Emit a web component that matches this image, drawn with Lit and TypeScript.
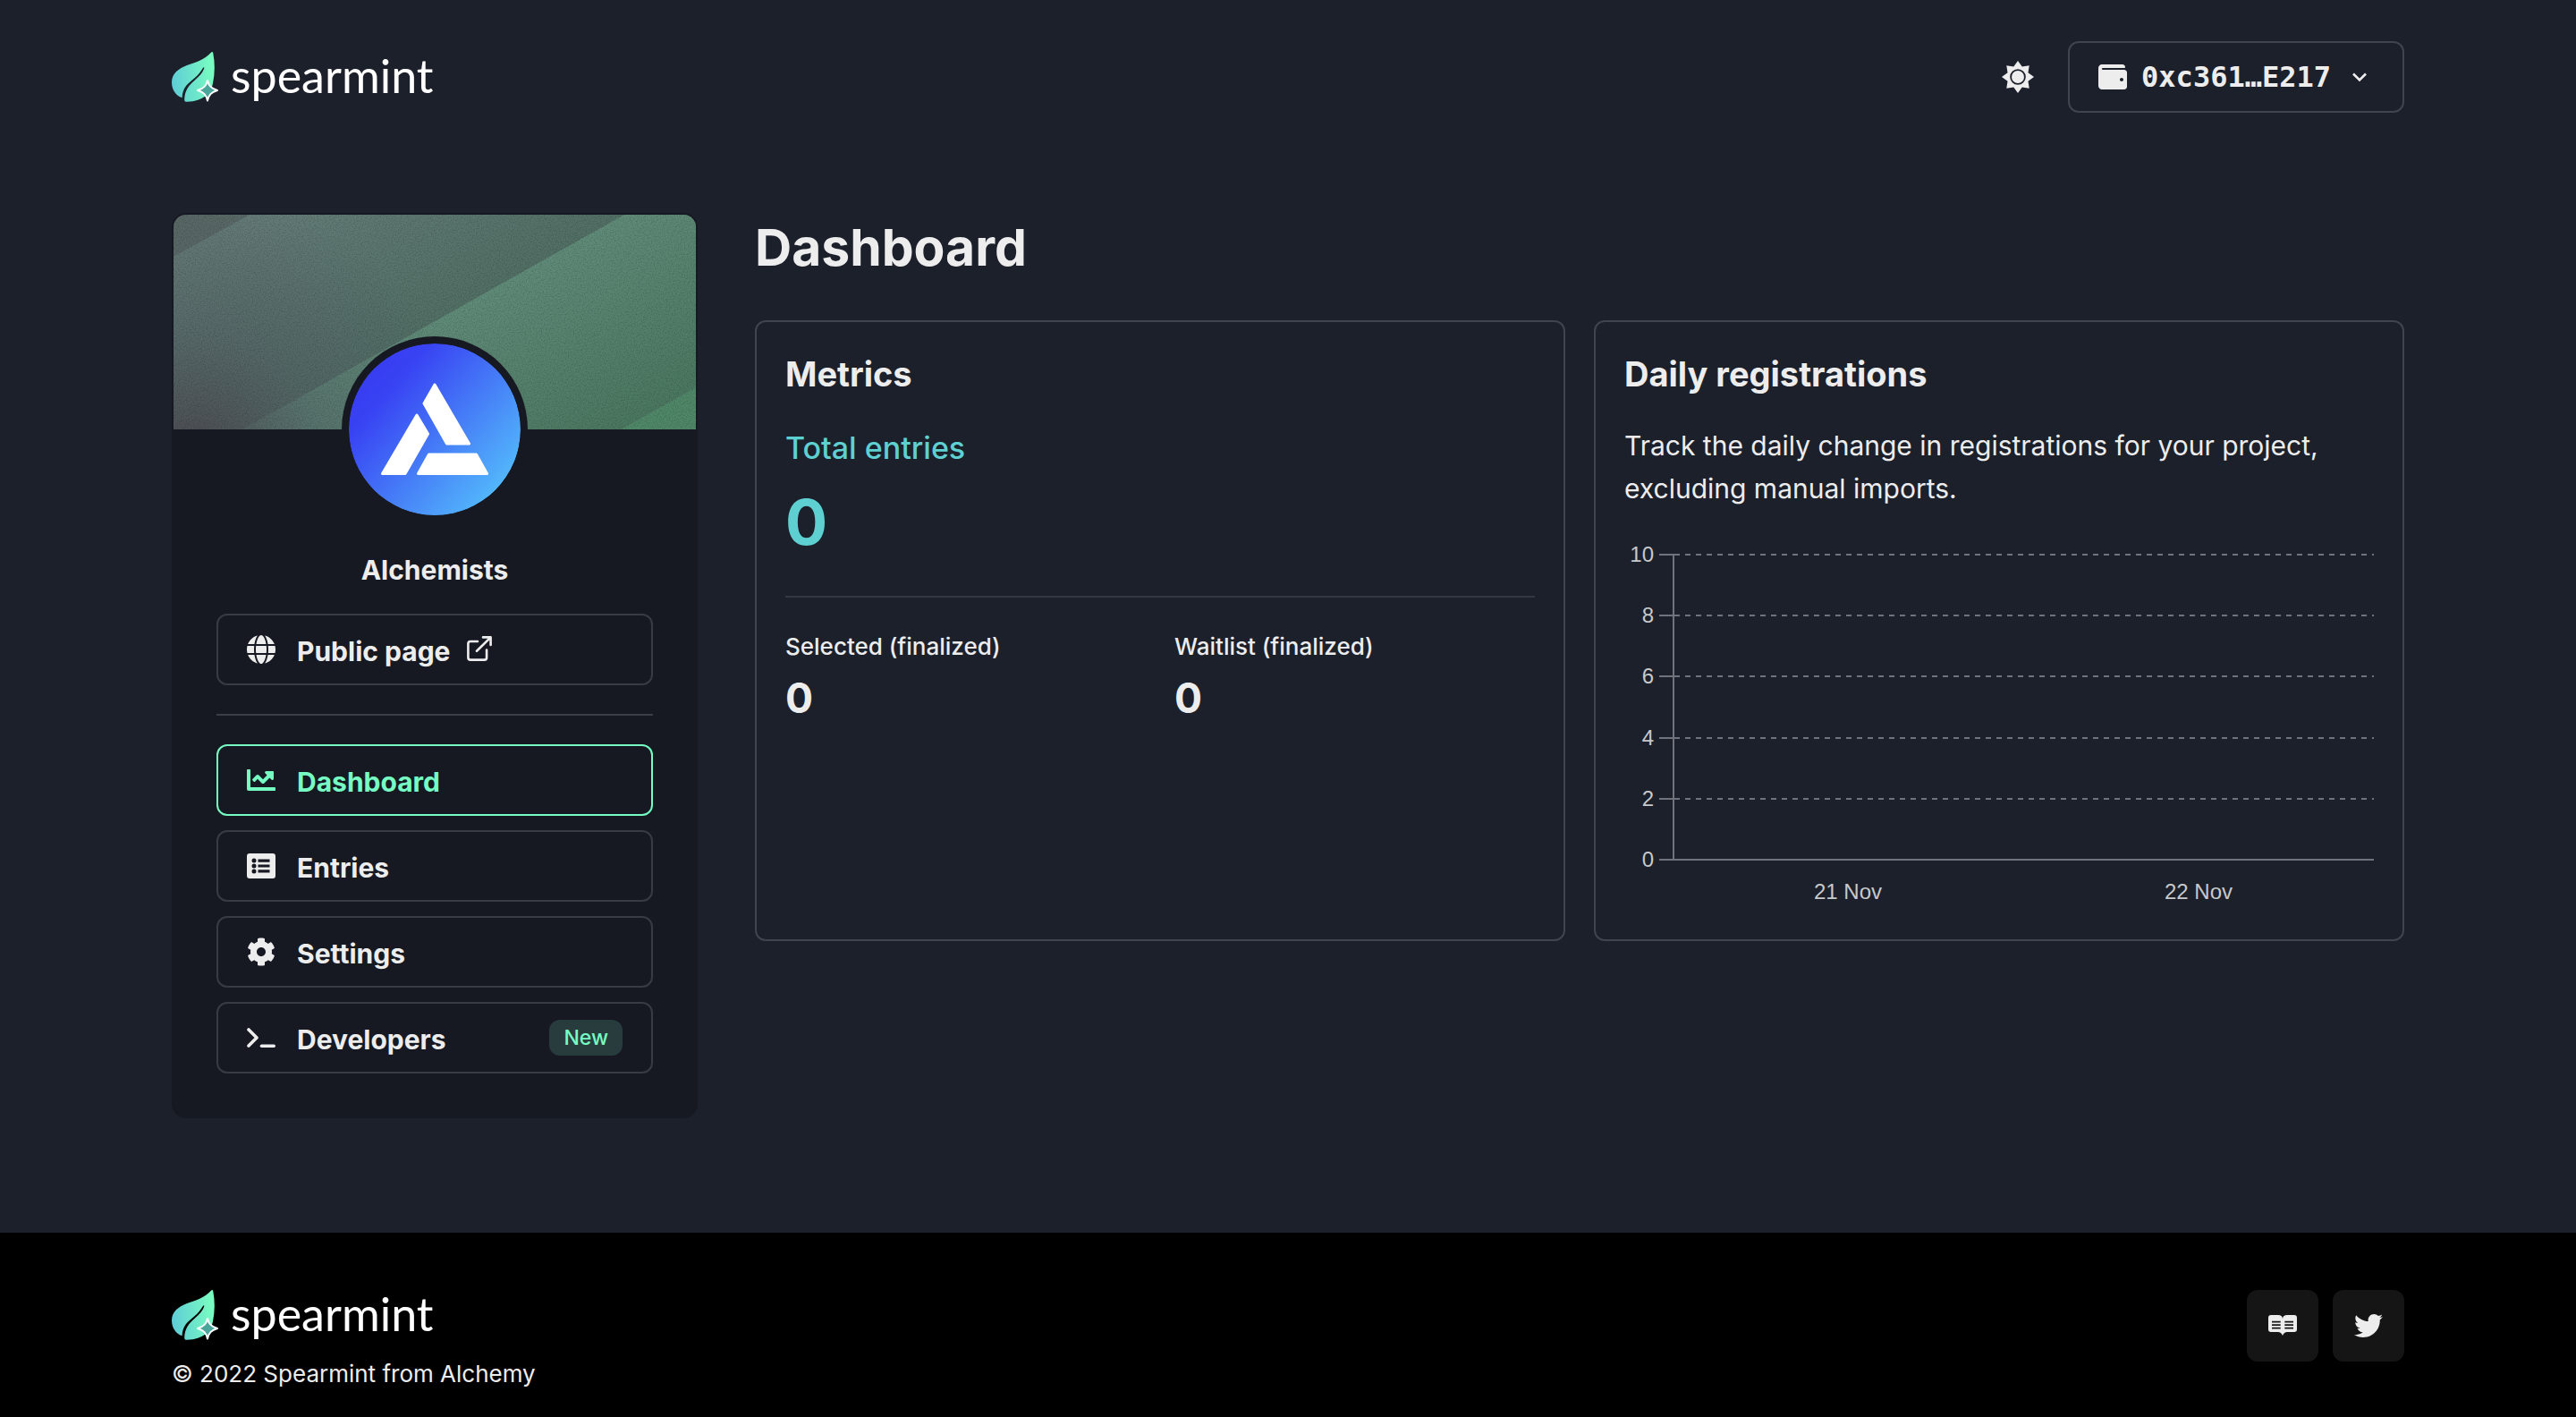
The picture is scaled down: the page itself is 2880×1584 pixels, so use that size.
import { LitElement, html, css, svg, nothing } from "lit";
import { customElement, property } from "lit/decorators.js";

const ICONS = {
  globe:
    "M352 256c0 22.2-1.2 43.6-3.3 64H163.3c-2.2-20.4-3.3-41.8-3.3-64s1.2-43.6 3.3-64H348.7c2.2 20.4 3.3 41.8 3.3 64zm28.8-64H503.9c5.3 20.5 8.1 41.9 8.1 64s-2.8 43.5-8.1 64H380.8c2.1-20.6 3.2-42 3.2-64s-1.1-43.4-3.2-64zm112.6-32H376.7c-10-63.9-29.8-117.4-55.3-151.6c78.3 20.7 142 77.5 171.9 151.6zm-149.1 0H167.7c6.1-36.4 15.5-68.6 27-94.7c10.5-23.6 22.2-40.7 33.5-51.5C239.4 3.2 248.7 0 256 0s16.6 3.2 27.8 13.8c11.3 10.8 23 27.9 33.5 51.5c11.6 26 20.9 58.2 27 94.7zm-209 0H18.6C48.6 85.9 112.2 29.1 190.6 8.4C165.1 42.6 145.3 96.1 135.3 160zM8.1 192H131.2c-2.1 20.6-3.2 42-3.2 64s1.1 43.4 3.2 64H8.1C2.8 299.5 0 278.1 0 256s2.8-43.5 8.1-64zM194.7 446.6c-11.6-26-20.9-58.2-27-94.6H344.3c-6.1 36.4-15.5 68.6-27 94.6c-10.5 23.6-22.2 40.7-33.5 51.5C272.6 508.8 263.3 512 256 512s-16.6-3.2-27.8-13.8c-11.3-10.8-23-27.9-33.5-51.5zM135.3 352c10 63.9 29.8 117.4 55.3 151.6C112.2 482.9 48.6 426.1 18.6 352H135.3zm358.1 0c-30 74.1-93.6 130.9-171.9 151.6c25.5-34.2 45.2-87.7 55.3-151.6H493.4z",
  chart:
    "M496 384H64V80c0-8.84-7.16-16-16-16H16C7.16 64 0 71.16 0 80v336c0 17.67 14.33 32 32 32h464c8.84 0 16-7.16 16-16v-32c0-8.84-7.16-16-16-16zM464 96H345.94c-21.38 0-32.09 25.85-16.97 40.97l32.4 32.4L288 242.75l-73.37-73.37c-12.5-12.5-32.76-12.5-45.25 0l-68.69 68.69c-6.25 6.25-6.25 16.38 0 22.63l22.62 22.62c6.25 6.25 16.38 6.25 22.63 0L192 237.25l73.37 73.37c12.5 12.5 32.76 12.5 45.25 0l96-96 32.4 32.4c15.12 15.12 40.97 4.41 40.97-16.97V112c.01-8.84-7.15-16-15.99-16z",
  cog: "M487.4 315.7l-42.6-24.6c4.3-23.2 4.3-47 0-70.2l42.6-24.6c4.9-2.8 7.1-8.6 5.5-14-11.1-35.6-30-67.8-54.7-94.6-3.8-4.1-10-5.1-14.8-2.3L380.8 110c-17.9-15.4-38.5-27.3-60.8-35.1V25.8c0-5.6-3.9-10.5-9.4-11.7-36.7-8.2-74.3-7.8-109.2 0-5.5 1.2-9.4 6.1-9.4 11.7V75c-22.2 7.9-42.8 19.8-60.8 35.1L88.7 85.5c-4.9-2.8-11-1.9-14.8 2.3-24.7 26.7-43.6 58.9-54.7 94.6-1.7 5.4.6 11.2 5.5 14L67.3 221c-4.3 23.2-4.3 47 0 70.2l-42.6 24.6c-4.9 2.8-7.1 8.6-5.5 14 11.1 35.6 30 67.8 54.7 94.6 3.8 4.1 10 5.1 14.8 2.3l42.6-24.6c17.9 15.4 38.5 27.3 60.8 35.1v49.2c0 5.6 3.9 10.5 9.4 11.7 36.7 8.2 74.3 7.8 109.2 0 5.5-1.2 9.4-6.1 9.4-11.7v-49.2c22.2-7.9 42.8-19.8 60.8-35.1l42.6 24.6c4.9 2.8 11 1.9 14.8-2.3 24.7-26.7 43.6-58.9 54.7-94.6 1.5-5.5-.7-11.3-5.6-14.1zM256 336c-44.1 0-80-35.9-80-80s35.9-80 80-80 80 35.9 80 80-35.9 80-80 80z",
  wallet:
    "M461.2 128H80c-8.84 0-16-7.16-16-16s7.16-16 16-16h384c8.84 0 16-7.16 16-16 0-26.51-21.49-48-48-48H64C28.65 32 0 60.65 0 96v320c0 35.35 28.65 64 64 64h397.2c28.02 0 50.8-21.53 50.8-48V176c0-26.47-22.78-48-50.8-48zM416 336c-17.67 0-32-14.33-32-32s14.33-32 32-32 32 14.33 32 32-14.33 32-32 32z",
  twitter:
    "M459.37 151.716c.325 4.548.325 9.097.325 13.645 0 138.72-105.583 298.558-298.558 298.558-59.452 0-114.68-17.219-161.137-47.106 8.447.974 16.568 1.299 25.34 1.299 49.055 0 94.213-16.568 130.274-44.832-46.132-.975-84.792-31.188-98.112-72.772 6.498.974 12.995 1.624 19.818 1.624 9.421 0 18.843-1.3 27.614-3.573-48.081-9.747-84.143-51.98-84.143-102.985v-1.299c13.969 7.797 30.214 12.67 47.431 13.319-28.264-18.843-46.781-51.005-46.781-87.391 0-19.492 5.197-37.36 14.294-52.954 51.655 63.675 129.3 105.258 216.365 109.807-1.624-7.797-2.599-15.918-2.599-24.04 0-57.828 46.782-104.934 104.934-104.934 30.213 0 57.502 12.67 76.67 33.137 23.715-4.548 46.456-13.32 66.599-25.34-7.798 24.366-24.366 44.833-46.132 57.827 21.117-2.273 41.584-8.122 60.426-16.243-14.292 20.791-32.161 39.308-52.628 54.253z",
};

const solid = (d: string) => html`
  <svg class="icon" viewBox="0 0 512 512" aria-hidden="true"><path fill="currentColor" d=${d} /></svg>
`;

const listIcon = html`
  <svg class="icon" viewBox="0 0 32 32" aria-hidden="true">
    <path
      fill="currentColor"
      fill-rule="evenodd"
      d="M3 2h26a3 3 0 0 1 3 3v22a3 3 0 0 1-3 3H3a3 3 0 0 1-3-3V5a3 3 0 0 1 3-3zM8 7.600a2.500 2.500 0 1 0 0 5a2.500 2.500 0 1 0 0-5zM8 13.500a2.500 2.500 0 1 0 0 5a2.500 2.500 0 1 0 0-5zM8 19.400a2.500 2.500 0 1 0 0 5a2.500 2.500 0 1 0 0-5zM12.500 8.500v3.200h13V8.500zM12.500 14.400v3.200h13v-3.200zM12.500 20.300v3.200h13v-3.200z"
    />
  </svg>
`;

const terminalIcon = html`
  <svg class="icon" viewBox="0 0 32 32" aria-hidden="true">
    <g fill="none" stroke="currentColor" stroke-width="3.600" stroke-linecap="round" stroke-linejoin="round">
      <path d="M2 7L11 16L2 25" />
      <path d="M16.500 25.200H30.200" />
    </g>
  </svg>
`;

const externalIcon = html`
  <svg class="external" viewBox="0 0 28 28" aria-hidden="true">
    <g fill="none" stroke="currentColor" stroke-width="2.600" stroke-linecap="round" stroke-linejoin="round">
      <path d="M12 6H4a2.600 2.600 0 0 0-2.600 2.600V24A2.600 2.600 0 0 0 4 26.600H19.500A2.600 2.600 0 0 0 22.100 24V15.500" />
      <path d="M18 1.400H26.600V10M26.400 1.600L11 16.800" />
    </g>
  </svg>
`;

// Eight-pointed star outline used by the theme switch.
const sunPoints = Array.from({ length: 16 }, (_, i) => {
  const r = i % 2 ? 12.4 : 18;
  const a = (i * Math.PI) / 8;
  return `${(18 + r * Math.sin(a)).toFixed(2)},${(18 - r * Math.cos(a)).toFixed(2)}`;
}).join(" ");

interface NavItem {
  label: string;
  icon: unknown;
  href: string;
  active?: boolean;
  external?: boolean;
  badge?: string;
}

const PUBLIC_PAGE: NavItem = { label: "Public page", icon: solid(ICONS.globe), href: "#public", external: true };

const SECTIONS: NavItem[] = [
  { label: "Dashboard", icon: solid(ICONS.chart), href: "#dashboard", active: true },
  { label: "Entries", icon: listIcon, href: "#entries" },
  { label: "Settings", icon: solid(ICONS.cog), href: "#settings" },
  { label: "Developers", icon: terminalIcon, href: "#developers", badge: "New" },
];

@customElement("spearmint-logo")
export class SpearmintLogo extends LitElement {
  static styles = css`
    :host {
      display: block;
    }
    .logo {
      display: flex;
      align-items: center;
      gap: 12px;
      height: 56px;
      color: #fff;
      text-decoration: none;
      font: 400 52px/52px Lato, sans-serif;
    }
    .word {
      padding-bottom: 4px;
    }
    .leaf {
      display: block;
      width: 54px;
      height: 58px;
    }
  `;

  render() {
    return html`
      <a class="logo" href="#home">
        <svg class="leaf" viewBox="0 0 54 58" aria-hidden="true">
          <defs>
            <linearGradient id="mint" x1="0" y1="0.5" x2="1" y2="0.350">
              <stop offset="0" stop-color="#5fcdd5" />
              <stop offset="1" stop-color="#7affc0" />
            </linearGradient>
          </defs>
          <path
            fill="url(#mint)"
            d="M44.200 1.400C45 .500 46 .800 46.200 2C48.400 13 48.400 25 46 36C44 47 36 56 17 56.800C15 56.800 14 56 14.200 54C14.600 44 19 38.500 26 32.500C31 28 35 24 36.300 19C36.500 18 35.500 18 35 18.800C31 26 26 30 20 35C14.500 39.500 12 45 11.600 52.200C4.500 50 0 43 0 35C0 25 8 19.500 17 16C27 12.500 36 10 44.200 1.400Z"
          />
          <path
            fill="#4aa59b"
            stroke="#fff"
            stroke-width="2"
            stroke-linejoin="round"
            d="M40 33C41.500 39 44 41.800 51 44C44 46.200 41.500 49 40 55.500C38.500 49 36 46.200 29 44C36 41.800 38.500 39 40 33Z"
          />
        </svg>
        <span class="word">spearmint</span>
      </a>
    `;
  }
}

@customElement("registrations-chart")
export class RegistrationsChart extends LitElement {
  @property({ type: Array }) ticks: number[] = [10, 8, 6, 4, 2, 0];
  @property({ type: Array }) days: string[] = ["21 Nov", "22 Nov"];

  static styles = css`
    :host {
      display: block;
      color: #c8c9cb;
      font: 400 24px/42px "Liberation Sans", Arial, sans-serif;
    }
    .plot {
      display: block;
      width: 100%;
      height: 386px;
    }
    .plot text {
      fill: currentColor;
      text-anchor: end;
    }
    .line {
      stroke: #70737b;
      stroke-width: 2;
    }
    .dashed {
      stroke-dasharray: 6 6;
    }
    .days {
      display: flex;
      padding-left: 54px;
    }
    .day {
      flex: 1;
      text-align: center;
    }
  `;

  render() {
    const top = 30;
    const span = 341;
    const last = this.ticks.length - 1;
    return html`
      <svg class="plot" role="img" aria-label="Daily registrations">
        ${this.ticks.map((tick, i) => {
          const y = Math.round(top + (i * span) / last);
          return svg`
            <text x="33" y=${y + 8}>${tick}</text>
            <line class="line" x1="39" x2="55" y1=${y} y2=${y} />
            <line class="line ${i === last ? "" : "dashed"}" x1="56" x2="100%" y1=${y} y2=${y} />`;
        })}
        <line class="line" x1="55" x2="55" y1=${top - 1} y2=${top + span + 1} />
      </svg>
      <div class="days">${this.days.map((d) => html`<span class="day">${d}</span>`)}</div>
    `;
  }
}

@customElement("app-root")
export class AppRoot extends LitElement {
  static styles = css`
    :host {
      display: flex;
      flex-direction: column;
      min-height: 100vh;
      background: #1c202b;
      color: #ededee;
      font-family: Inter, "Liberation Sans", sans-serif;
      font-size: 30px;
    }
    * {
      box-sizing: border-box;
    }
    h1,
    h2,
    p,
    dl,
    dd {
      margin: 0;
    }
    .icon {
      display: block;
      flex: none;
      width: 32px;
      height: 32px;
    }
    .external {
      width: 28px;
      height: 28px;
      margin-left: -6px;
      margin-bottom: 2px;
    }
    .header {
      display: flex;
      align-items: center;
      justify-content: space-between;
      padding: 46px 192px 0;
    }
    .tools {
      display: flex;
      align-items: center;
      gap: 24px;
    }
    .theme {
      display: grid;
      place-items: center;
      width: 64px;
      height: 64px;
      padding: 0;
      border: 0;
      background: none;
      color: inherit;
    }
    .sun {
      width: 36px;
      height: 36px;
    }
    .wallet {
      display: flex;
      align-items: center;
      gap: 16px;
      height: 80px;
      padding: 0 32px;
      border: 2px solid #40444d;
      border-radius: 12px;
      background: none;
      color: inherit;
      font: 700 32px/40px "DejaVu Sans Mono", monospace;
    }
    .body {
      display: grid;
      grid-template-columns: 588px minmax(0, 1fr);
      align-items: start;
      gap: 64px;
      padding: 112px 192px 128px;
    }

    /* Project card */
    .project {
      display: flex;
      flex-direction: column;
      border: 2px solid #171922;
      border-radius: 16px;
      background: #171922;
      overflow: hidden;
    }
    .cover {
      display: block;
      width: 100%;
      height: 240px;
    }
    .avatar {
      align-self: center;
      width: 208px;
      height: 208px;
      margin-top: -104px;
      padding: 8px;
      border-radius: 50%;
      background: #171922;
    }
    .name {
      margin: 28px 0 24px;
      font-size: 30px;
      font-weight: 700;
      line-height: 50px;
      text-align: center;
    }
    .nav {
      display: flex;
      flex-direction: column;
      gap: 16px;
      padding: 0 48px 48px;
    }
    .rule {
      width: 100%;
      height: 2px;
      margin: 16px 0;
      border: 0;
      background: #3c3e46;
    }
    .item {
      display: flex;
      align-items: center;
      gap: 24px;
      height: 80px;
      padding: 0 32px;
      border: 2px solid #393b43;
      border-radius: 12px;
      color: inherit;
      font-weight: 700;
      line-height: 40px;
      text-decoration: none;
    }
    .item.active {
      border-color: #76fdc3;
      color: #76fdc3;
    }
    .label {
      padding-top: 4px;
    }
    .badge {
      margin-left: auto;
      padding: 0 16px;
      border-radius: 12px;
      background: #283c3d;
      color: #76fdc3;
      font-size: 23px;
      font-weight: 500;
    }

    /* Dashboard */
    .title {
      margin-bottom: 42px;
      font-size: 57px;
      font-weight: 700;
      line-height: 78px;
    }
    .cards {
      display: grid;
      grid-template-columns: repeat(2, minmax(0, 1fr));
      gap: 32px;
    }
    .card {
      padding: 32px;
      border: 2px solid #40444d;
      border-radius: 12px;
    }
    .card-title {
      font-size: 38px;
      font-weight: 700;
      line-height: 52px;
    }
    .total {
      padding: 32px 0 46px;
      border-bottom: 2px solid #33373f;
      color: #5fd0d2;
    }
    .total-label {
      margin-bottom: 22px;
      font-size: 34px;
      font-weight: 500;
      line-height: 50px;
    }
    .total-value {
      font-size: 70px;
      font-weight: 700;
      line-height: 72px;
    }
    .stats {
      display: grid;
      grid-template-columns: repeat(2, minmax(0, 1fr));
      gap: 32px;
      padding-top: 32px;
    }
    .stat-label {
      margin-bottom: 6px;
      font-size: 26px;
      font-weight: 500;
      line-height: 46px;
    }
    .stat-value {
      font-size: 46px;
      font-weight: 700;
      line-height: 56px;
    }
    .intro {
      margin: 30px 0 20px;
      line-height: 48px;
    }

    /* Footer */
    .footer {
      flex: 1;
      display: flex;
      align-items: flex-start;
      justify-content: space-between;
      padding: 64px 192px 28px;
      background: #000;
    }
    .copyright {
      margin-top: 18px;
      font-size: 26px;
      line-height: 40px;
    }
    .links {
      display: flex;
      gap: 16px;
    }
    .link {
      display: grid;
      place-items: center;
      width: 80px;
      height: 80px;
      border-radius: 12px;
      background: #151515;
      color: inherit;
    }
  `;

  private navItem(item: NavItem) {
    return html`
      <a class="item ${item.active ? "active" : ""}" href=${item.href} aria-current=${item.active ? "page" : nothing}>
        ${item.icon}
        <span class="label">${item.label}</span>
        ${item.external ? externalIcon : nothing}
        ${item.badge ? html`<span class="badge">${item.badge}</span>` : nothing}
      </a>
    `;
  }

  private cover() {
    return html`
      <svg class="cover" viewBox="0 0 584 240" preserveAspectRatio="xMidYMid slice" aria-hidden="true">
        <defs>
          <linearGradient id="upper" gradientUnits="userSpaceOnUse" x1="20" y1="36" x2="121" y2="215">
            <stop offset="0" stop-color="#667e79" />
            <stop offset="1" stop-color="#527066" />
          </linearGradient>
          <linearGradient id="lower" gradientUnits="userSpaceOnUse" x1="121" y1="215" x2="222" y2="395">
            <stop offset="0" stop-color="#608c79" />
            <stop offset="1" stop-color="#4b7861" />
          </linearGradient>
          <radialGradient id="shade" gradientUnits="userSpaceOnUse" cx="20" cy="270" r="300">
            <stop offset="0" stop-color="#4b474f" stop-opacity="0.950" />
            <stop offset="0.500" stop-color="#515b62" stop-opacity="0.450" />
            <stop offset="1" stop-color="#515b62" stop-opacity="0" />
          </radialGradient>
          <filter id="grain" x="0" y="0" width="100%" height="100%">
            <feTurbulence type="fractalNoise" baseFrequency="0.700" numOctaves="2" />
            <feColorMatrix values="0 0 0 0 0  0 0 0 0 0  0 0 0 0 0  0.800 0 0 0 -0.320" />
          </filter>
        </defs>
        <rect width="584" height="240" fill="#5a6a66" />
        <path fill="url(#upper)" d="M85 0H504L77 240H0V47Z" />
        <path fill="url(#lower)" d="M504 0H584V193L500 240H77Z" />
        <path fill="#508869" d="M584 193V240H500Z" />
        <rect width="584" height="240" fill="url(#shade)" />
        <rect width="584" height="240" filter="url(#grain)" opacity="0.500" />
      </svg>
    `;
  }

  private avatar() {
    return html`
      <svg class="avatar" viewBox="0 0 192 192" role="img" aria-label="Alchemists">
        <defs>
          <linearGradient id="sky" x1="0.150" y1="0.220" x2="0.880" y2="0.850">
            <stop offset="0" stop-color="#383ff2" />
            <stop offset="0.100" stop-color="#3843f3" />
            <stop offset="1" stop-color="#53b8fb" />
          </linearGradient>
        </defs>
        <circle cx="96" cy="96" r="96" fill="url(#sky)" />
        <g fill="#fff" stroke="#fff" stroke-width="3" stroke-linejoin="round">
          <path d="M96 46L134.500 112H109.500L84 67Z" />
          <path d="M76 80L88.500 101L63 145.500H37.500Z" />
          <path d="M89.500 124H142.500L154.500 145.500H77.500Z" />
        </g>
      </svg>
    `;
  }

  render() {
    return html`
      <header class="header">
        <spearmint-logo></spearmint-logo>
        <div class="tools">
          <button class="theme" type="button" aria-label="Toggle theme">
            <svg class="sun" viewBox="0 0 36 36" aria-hidden="true">
              <path
                fill="currentColor"
                fill-rule="evenodd"
                d="M${sunPoints}ZM18 9.200a8.800 8.800 0 1 0 0 17.600a8.800 8.800 0 1 0 0-17.600Z"
              />
              <circle cx="18" cy="18" r="7" fill="currentColor" />
            </svg>
          </button>
          <button class="wallet" type="button">
            ${solid(ICONS.wallet)}
            <span>0xc361…E217</span>
            <svg class="icon" viewBox="0 0 32 32" aria-hidden="true">
              <path d="M9 12.500L16 19.500L23 12.500" fill="none" stroke="currentColor" stroke-width="2.600" />
            </svg>
          </button>
        </div>
      </header>

      <div class="body">
        <aside class="project">
          ${this.cover()} ${this.avatar()}
          <p class="name">Alchemists</p>
          <nav class="nav">
            ${this.navItem(PUBLIC_PAGE)}
            <hr class="rule" />
            ${SECTIONS.map((s) => this.navItem(s))}
          </nav>
        </aside>

        <main>
          <h1 class="title">Dashboard</h1>
          <div class="cards">
            <section class="card">
              <h2 class="card-title">Metrics</h2>
              <div class="total">
                <p class="total-label">Total entries</p>
                <p class="total-value">0</p>
              </div>
              <dl class="stats">
                <div>
                  <dt class="stat-label">Selected (finalized)</dt>
                  <dd class="stat-value">0</dd>
                </div>
                <div>
                  <dt class="stat-label">Waitlist (finalized)</dt>
                  <dd class="stat-value">0</dd>
                </div>
              </dl>
            </section>
            <section class="card">
              <h2 class="card-title">Daily registrations</h2>
              <p class="intro">Track the daily change in registrations for your project, excluding manual imports.</p>
              <registrations-chart></registrations-chart>
            </section>
          </div>
        </main>
      </div>

      <footer class="footer">
        <div>
          <spearmint-logo></spearmint-logo>
          <p class="copyright">© 2022 Spearmint from Alchemy</p>
        </div>
        <div class="links">
          <a class="link" href="#docs" aria-label="Documentation">
            <svg class="icon" viewBox="0 0 32 32" aria-hidden="true">
              <path
                fill="currentColor"
                fill-rule="evenodd"
                d="M3 4H11C14 4 15.500 5 16 8C16.500 5 18 4 21 4H29A3 3 0 0 1 32 7V20A3 3 0 0 1 29 23H22C18.500 23 17.500 24 16 27C14.500 24 13.500 23 10 23H3A3 3 0 0 1 0 20V7A3 3 0 0 1 3 4ZM4 10.700V12.500H13.700V10.700ZM4 14.200V16H13.700V14.200ZM4 17.700V19.500H13.700V17.700ZM18.300 10.700V12.500H28V10.700ZM18.300 14.200V16H28V14.200ZM18.300 17.700V19.500H28V17.700Z"
              />
            </svg>
          </a>
          <a class="link" href="#twitter" aria-label="Twitter">${solid(ICONS.twitter)}</a>
        </div>
      </footer>
    `;
  }
}
